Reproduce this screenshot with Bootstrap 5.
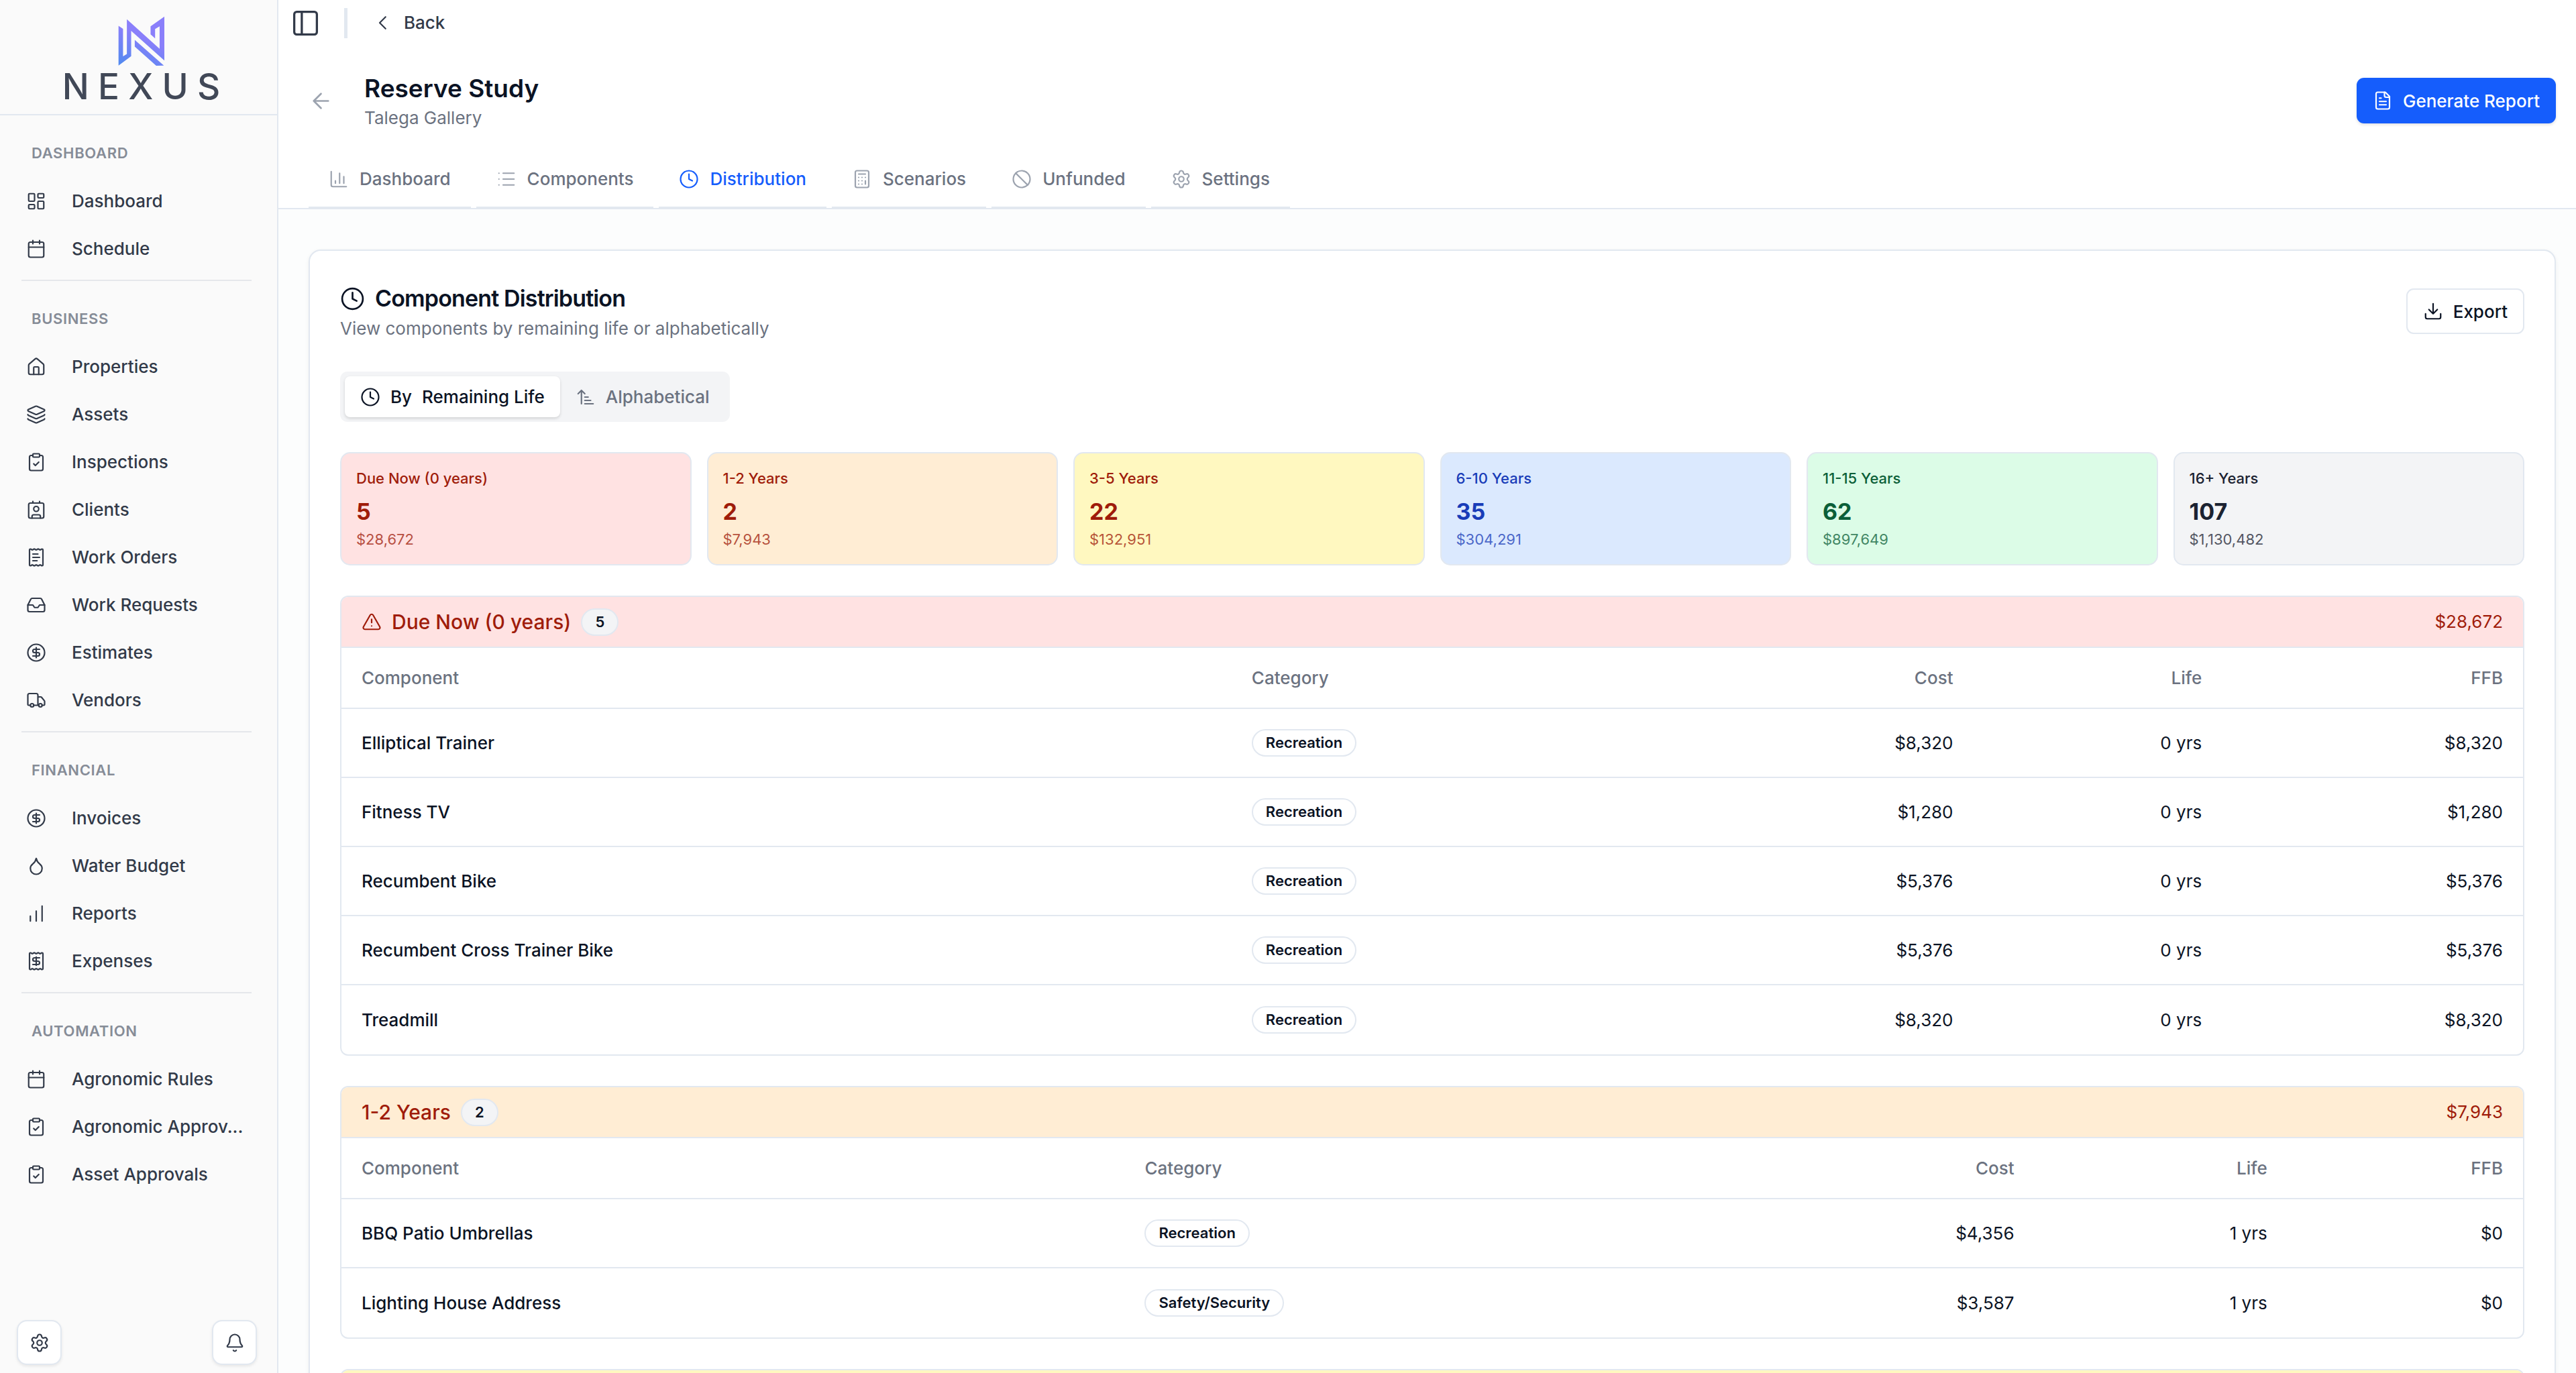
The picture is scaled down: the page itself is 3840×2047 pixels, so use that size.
<!DOCTYPE html>
<html lang="en">
<head>
<meta charset="utf-8">
<meta name="viewport" content="width=device-width, initial-scale=1">
<title>Reserve Study - Nexus</title>
<link href="https://cdn.jsdelivr.net/npm/bootstrap@5.3.0/dist/css/bootstrap.min.css" rel="stylesheet">
<style>
  :root { --line: #e2e8f0; --ink: #0b1324; --muted-ink: #6b7280; --side-ink: #323a49; }
  body { font-family: Inter, "Liberation Sans", sans-serif; font-size: 26px; line-height: 38px; color: var(--ink); background: #fcfdfd; height: 100vh; overflow: hidden; }
  .ico { width: 30px; height: 30px; flex: none; fill: none; stroke: currentColor; stroke-width: 1.75; stroke-linecap: round; stroke-linejoin: round; }
  .ico-lg { width: 37px; height: 37px; }
  .ico-xl { width: 45px; height: 45px; }
  .ico-pale { color: #9ca3af; }
  a { color: inherit; text-decoration: none; }

  /* sidebar */
  .side { width: 415px; flex: none; background: #fafafa; border-right: 2px solid var(--line); color: var(--side-ink); }
  .brand { height: 172px; border-bottom: 2px solid var(--line); padding: 24px 0 0 8px; }
  .brand-mark { width: 70px; height: 75px; }
  .brand-name { font-size: 53px; line-height: 60px; font-weight: 500; letter-spacing: .25em; margin-right: -.25em; color: #414857; }
  .side-group { margin: 0 38px 0 32px; padding: 36px 0 11px; border-bottom: 2px solid #e5e7eb; }
  .side-group:last-child { border-bottom: 0; }
  .side-title { font-size: 22px; line-height: 40px; font-weight: 600; letter-spacing: .03em; color: #868c97; padding-left: 15px; margin-bottom: 16px; }
  .side-link { height: 71px; padding-left: 7px; gap: 38px; font-weight: 500; }
  .side-foot { padding: 0 30px 12px 25px; }
  .square-btn { width: 67px; height: 67px; background: #fff; border: 2px solid var(--line); border-radius: 15px; color: var(--side-ink); box-shadow: 0 2px 4px rgba(0,0,0,.08); padding: 0; }

  /* top area */
  .top { background: #fff; border-bottom: 2px solid var(--line); }
  .crumbs { height: 68px; padding-left: 18px; }
  .crumb-rule { width: 5px; height: 45px; background: var(--line); margin: 0 30px 0 35px; }
  .plain-btn { background: none; border: 0; padding: 0; color: var(--side-ink); font-weight: 500; }
  .plain-btn.ico-pale { color: #9ca3af; }
  .page-head { padding: 38px 30px 0 45px; height: 160px; }
  .page-title { font-size: 37px; line-height: 51px; font-weight: 600; margin: 0; }
  .title-block { padding-left: 46px; }
  .soft { color: var(--muted-ink); }
  .act { height: 68px; border-radius: 11px; font-size: 26px; font-weight: 500; padding: 0 23px; gap: 15px; }
  .act-main { background: #155dfc; color: #fff; box-shadow: 0 2px 4px rgba(0,0,0,.12); margin-top: 10px; }
  .act-line { background: #fff; border: 2px solid var(--line); color: var(--ink); }
  .tabs { padding-left: 45px; gap: 8px; }
  .tab { height: 82px; padding: 0 30px 2px; gap: 16px; border-bottom: 2px solid var(--line); font-weight: 500; color: var(--muted-ink); }
  .tab .ico { color: #9ca3af; }
  .tab.on, .tab.on .ico { color: #155dfc; }

  /* panel */
  .panel-wrap { padding: 60px 30px 0 45px; }
  .panel { background: #fff; border: 2px solid var(--line); border-radius: 18px; padding: 45px; box-shadow: 0 2px 6px rgba(0,0,0,.06); }
  .panel-title { font-size: 34px; line-height: 52px; font-weight: 600; letter-spacing: -.025em; margin: 0; gap: 15px; }
  .seg { background: #f3f4f6; border-radius: 11px; padding: 7px; margin: 45px 0; }
  .seg-btn { height: 61px; border: 0; background: none; border-radius: 8px; padding: 0 23px; gap: 15px; font-weight: 500; color: var(--muted-ink); }
  .seg-btn.on { background: #fff; color: var(--ink); box-shadow: 0 2px 4px rgba(0,0,0,.14); }
  .tiles { display: grid; grid-template-columns: repeat(6, 1fr); gap: 23px; }
  .tile { border: 2px solid var(--line); border-radius: 15px; padding: 20px 22px; height: 169px; }
  .tile-name { font-size: 22px; line-height: 34px; font-weight: 500; }
  .tile-num { font-size: 34px; line-height: 53px; font-weight: 700; padding-top: 6px; }
  .tile-sum { font-size: 22px; line-height: 30px; opacity: .75; }
  .t-red { background: #ffe2e2; color: #9f1c0a; }
  .t-orange { background: #ffedd4; color: #9f1c0a; }
  .t-yellow { background: #fff8c0; color: #9f1c0a; }
  .t-blue { background: #dbe9fe; color: #193cb8; }
  .t-green { background: #dcfce7; color: #0b5f38; }
  .t-gray { background: #f3f4f6; color: #1b2231; }

  .bucket { border: 2px solid var(--line); border-radius: 12px; overflow: hidden; margin-top: 45px; }
  .bucket-head { height: 76px; border-bottom: 2px solid var(--line); padding: 0 30px; }
  .bucket-name { font-size: 30px; line-height: 40px; font-weight: 500; margin: 0; }
  .bucket-title { gap: 15px; }
  .pill { display: inline-block; font-size: 22px; line-height: 37px; font-weight: 600; border: 2px solid var(--line); border-radius: 21px; padding: 0 19px; color: var(--ink); vertical-align: middle; }
  .pill-count { background: #f3f4f6; }
  .grid-table { width: 100%; table-layout: fixed; border-collapse: separate; border-spacing: 0; }
  .grid-table th { height: 91px; font-weight: 500; color: var(--muted-ink); }
  .grid-table td { height: 103px; }
  .grid-table td:first-child { font-weight: 500; }
  .grid-table th, .grid-table td { padding: 0 30px; border-bottom: 2px solid var(--line); vertical-align: middle; }
  .grid-table tbody tr:last-child td { border-bottom: 0; }
  .a-name { width: 40.8%; } .a-cat { width: 17%; } .a-cost { width: 17%; } .a-life { width: 11.4%; } .a-ffb { width: 13.8%; }
  .b-name { width: 35.9%; } .b-cat { width: 20.8%; } .b-cost { width: 20.9%; } .b-life { width: 11.6%; } .b-ffb { width: 10.8%; }
</style>
</head>
<body class="d-flex">

<svg class="d-none" xmlns="http://www.w3.org/2000/svg">
  <symbol id="i-dash" viewBox="0 0 24 24"><rect x="3" y="3" width="7" height="9" rx="1"/><rect x="14" y="3" width="7" height="5" rx="1"/><rect x="14" y="12" width="7" height="9" rx="1"/><rect x="3" y="16" width="7" height="5" rx="1"/></symbol>
  <symbol id="i-cal" viewBox="0 0 24 24"><path d="M8 2v4M16 2v4M3 10h18"/><rect x="3" y="4" width="18" height="18" rx="2"/></symbol>
  <symbol id="i-home" viewBox="0 0 24 24"><path d="M15 21v-8a1 1 0 0 0-1-1h-4a1 1 0 0 0-1 1v8"/><path d="M3 10a2 2 0 0 1 .709-1.528l7-5.999a2 2 0 0 1 2.582 0l7 5.999A2 2 0 0 1 21 10v9a2 2 0 0 1-2 2H5a2 2 0 0 1-2-2z"/></symbol>
  <symbol id="i-layers" viewBox="0 0 24 24"><path d="M12.83 2.18a2 2 0 0 0-1.66 0L2.6 6.08a1 1 0 0 0 0 1.83l8.58 3.91a2 2 0 0 0 1.66 0l8.58-3.9a1 1 0 0 0 0-1.83z"/><path d="M2 12a1 1 0 0 0 .58.91l8.6 3.91a2 2 0 0 0 1.65 0l8.58-3.9A1 1 0 0 0 22 12"/><path d="M2 17a1 1 0 0 0 .58.91l8.6 3.91a2 2 0 0 0 1.65 0l8.58-3.9A1 1 0 0 0 22 17"/></symbol>
  <symbol id="i-clip" viewBox="0 0 24 24"><rect x="8" y="2" width="8" height="4" rx="1"/><path d="M16 4h2a2 2 0 0 1 2 2v14a2 2 0 0 1-2 2H6a2 2 0 0 1-2-2V6a2 2 0 0 1 2-2h2"/><path d="m9 14 2 2 4-4"/></symbol>
  <symbol id="i-contact" viewBox="0 0 24 24"><path d="M16 2v2M8 2v2M7 22v-2a2 2 0 0 1 2-2h6a2 2 0 0 1 2 2v2"/><circle cx="12" cy="11" r="3"/><rect x="3" y="4" width="18" height="18" rx="2"/></symbol>
  <symbol id="i-receipt" viewBox="0 0 24 24"><path d="M4 3a1 1 0 0 1 1-1 1.3 1.3 0 0 1 .7.2l.933.6a1.3 1.3 0 0 0 1.4 0l.934-.6a1.3 1.3 0 0 1 1.4 0l.933.6a1.3 1.3 0 0 0 1.4 0l.933-.6a1.3 1.3 0 0 1 1.4 0l.934.6a1.3 1.3 0 0 0 1.4 0l.933-.6A1.3 1.3 0 0 1 19 2a1 1 0 0 1 1 1v18a1 1 0 0 1-1 1 1.3 1.3 0 0 1-.7-.2l-.933-.6a1.3 1.3 0 0 0-1.4 0l-.934.6a1.3 1.3 0 0 1-1.4 0l-.933-.6a1.3 1.3 0 0 0-1.4 0l-.933.6a1.3 1.3 0 0 1-1.4 0l-.934-.6a1.3 1.3 0 0 0-1.4 0l-.933.6a1.3 1.3 0 0 1-.7.2 1 1 0 0 1-1-1z"/><path d="M13 16H8M14 8H8M16 12H8"/></symbol>
  <symbol id="i-expense" viewBox="0 0 24 24"><path d="M4 3a1 1 0 0 1 1-1 1.3 1.3 0 0 1 .7.2l.933.6a1.3 1.3 0 0 0 1.4 0l.934-.6a1.3 1.3 0 0 1 1.4 0l.933.6a1.3 1.3 0 0 0 1.4 0l.933-.6a1.3 1.3 0 0 1 1.4 0l.934.6a1.3 1.3 0 0 0 1.4 0l.933-.6A1.3 1.3 0 0 1 19 2a1 1 0 0 1 1 1v18a1 1 0 0 1-1 1 1.3 1.3 0 0 1-.7-.2l-.933-.6a1.3 1.3 0 0 0-1.4 0l-.934.6a1.3 1.3 0 0 1-1.4 0l-.933-.6a1.3 1.3 0 0 0-1.4 0l-.933.6a1.3 1.3 0 0 1-1.4 0l-.934-.6a1.3 1.3 0 0 0-1.4 0l-.933.6a1.3 1.3 0 0 1-.7.2 1 1 0 0 1-1-1z"/><path d="M12 17V7M16 8h-6a2 2 0 0 0 0 4h4a2 2 0 0 1 0 4H8"/></symbol>
  <symbol id="i-inbox" viewBox="0 0 24 24"><path d="M22 12h-6l-2 3h-4l-2-3H2"/><path d="M5.45 5.11 2 12v6a2 2 0 0 0 2 2h16a2 2 0 0 0 2-2v-6l-3.45-6.89A2 2 0 0 0 16.76 4H7.24a2 2 0 0 0-1.79 1.11z"/></symbol>
  <symbol id="i-dollar" viewBox="0 0 24 24"><circle cx="12" cy="12" r="10"/><path d="M16 8h-6a2 2 0 1 0 0 4h4a2 2 0 1 1 0 4H8M12 18V6"/></symbol>
  <symbol id="i-truck" viewBox="0 0 24 24"><path d="M14 18V6a2 2 0 0 0-2-2H4a2 2 0 0 0-2 2v11a1 1 0 0 0 1 1h2M15 18H9M19 18h2a1 1 0 0 0 1-1v-3.65a1 1 0 0 0-.22-.624l-3.48-4.35A1 1 0 0 0 17.52 8H14"/><circle cx="17" cy="18" r="2"/><circle cx="7" cy="18" r="2"/></symbol>
  <symbol id="i-drop" viewBox="0 0 24 24"><path d="M12 22a7 7 0 0 0 7-7c0-2-1-3.9-3-5.5s-3.5-4-4-6.5c-.5 2.5-2 4.9-4 6.5C6 11.1 5 13 5 15a7 7 0 0 0 7 7z"/></symbol>
  <symbol id="i-bars" viewBox="0 0 24 24"><path d="M5 21v-6M12 21V9M19 21V3"/></symbol>
  <symbol id="i-gear" viewBox="0 0 24 24"><path d="M9.671 4.136a2.34 2.34 0 0 1 4.659 0 2.34 2.34 0 0 0 3.319 1.915 2.34 2.34 0 0 1 2.33 4.033 2.34 2.34 0 0 0 0 3.831 2.34 2.34 0 0 1-2.33 4.033 2.34 2.34 0 0 0-3.319 1.915 2.34 2.34 0 0 1-4.659 0 2.34 2.34 0 0 0-3.32-1.915 2.34 2.34 0 0 1-2.33-4.033 2.34 2.34 0 0 0 0-3.831A2.34 2.34 0 0 1 6.35 6.051a2.34 2.34 0 0 0 3.319-1.915"/><circle cx="12" cy="12" r="3"/></symbol>
  <symbol id="i-bell" viewBox="0 0 24 24"><path d="M10.268 21a2 2 0 0 0 3.464 0"/><path d="M3.262 15.326A1 1 0 0 0 4 17h16a1 1 0 0 0 .74-1.673C19.41 13.956 18 12.499 18 8A6 6 0 0 0 6 8c0 4.499-1.411 5.956-2.738 7.326"/></symbol>
  <symbol id="i-panel" viewBox="0 0 24 24"><rect x="3" y="3" width="18" height="18" rx="2"/><path d="M9 3v18"/></symbol>
  <symbol id="i-chev" viewBox="0 0 24 24"><path d="m15 19-7-7 7-7"/></symbol>
  <symbol id="i-left" viewBox="0 0 24 24"><path d="m12 19-7-7 7-7M19 12H5"/></symbol>
  <symbol id="i-chart" viewBox="0 0 24 24"><path d="M3 3v16a2 2 0 0 0 2 2h16M18 17V9M13 17V5M8 17v-3"/></symbol>
  <symbol id="i-list" viewBox="0 0 24 24"><path d="M3 5h.01M3 12h.01M3 19h.01M8 5h13M8 12h13M8 19h13"/></symbol>
  <symbol id="i-clock" viewBox="0 0 24 24"><circle cx="12" cy="12" r="10"/><path d="M12 6v6l4 2"/></symbol>
  <symbol id="i-calc" viewBox="0 0 24 24"><rect x="4" y="2" width="16" height="20" rx="2"/><path d="M8 6h8M16 14v4M16 10h.01M12 10h.01M8 10h.01M12 14h.01M8 14h.01M12 18h.01M8 18h.01"/></symbol>
  <symbol id="i-ban" viewBox="0 0 24 24"><circle cx="12" cy="12" r="10"/><path d="m4.9 4.9 14.2 14.2"/></symbol>
  <symbol id="i-file" viewBox="0 0 24 24"><path d="M15 2H6a2 2 0 0 0-2 2v16a2 2 0 0 0 2 2h12a2 2 0 0 0 2-2V7z"/><path d="M14 2v4a2 2 0 0 0 2 2h4M10 9H8M16 13H8M16 17H8"/></symbol>
  <symbol id="i-down" viewBox="0 0 24 24"><path d="M12 15V3M21 15v4a2 2 0 0 1-2 2H5a2 2 0 0 1-2-2v-4M7 10l5 5 5-5"/></symbol>
  <symbol id="i-sort" viewBox="0 0 24 24"><path d="m3 8 4-4 4 4M7 4v16M11 12h4M11 16h7M11 20h10"/></symbol>
  <symbol id="i-warn" viewBox="0 0 24 24"><path d="m21.73 18-8-14a2 2 0 0 0-3.48 0l-8 14A2 2 0 0 0 4 21h16a2 2 0 0 0 1.73-3M12 9v4M12 17h.01"/></symbol>
</svg>

<aside class="side d-flex flex-column vh-100">
  <div class="brand d-flex flex-column align-items-center">
    <svg class="brand-mark" viewBox="275 26 208 226" preserveAspectRatio="none" aria-hidden="true">
      <defs><linearGradient id="mark" gradientUnits="userSpaceOnUse" x1="280" y1="235" x2="345" y2="100"><stop offset="0" stop-color="#5389f0"/><stop offset="1" stop-color="#8a7ffa"/></linearGradient></defs>
      <path fill="url(#mark)" d="M277 70 297 83V207L314 196V40L459 173V72L439 84V126L419 108V72L480 28V226L333 92V206L277 248ZM349 133 478 248 444 249 349 163Z"/>
    </svg>
    <div class="brand-name">NEXUS</div>
  </div>
  <nav class="flex-grow-1" aria-label="Main">
    <div class="side-group">
      <div class="side-title">DASHBOARD</div>
      <a class="side-link d-flex align-items-center" href="#"><svg class="ico"><use href="#i-dash"/></svg><span class="text-truncate">Dashboard</span></a>
      <a class="side-link d-flex align-items-center" href="#"><svg class="ico"><use href="#i-cal"/></svg><span class="text-truncate">Schedule</span></a>
    </div>
    <div class="side-group">
      <div class="side-title">BUSINESS</div>
      <a class="side-link d-flex align-items-center" href="#"><svg class="ico"><use href="#i-home"/></svg><span class="text-truncate">Properties</span></a>
      <a class="side-link d-flex align-items-center" href="#"><svg class="ico"><use href="#i-layers"/></svg><span class="text-truncate">Assets</span></a>
      <a class="side-link d-flex align-items-center" href="#"><svg class="ico"><use href="#i-clip"/></svg><span class="text-truncate">Inspections</span></a>
      <a class="side-link d-flex align-items-center" href="#"><svg class="ico"><use href="#i-contact"/></svg><span class="text-truncate">Clients</span></a>
      <a class="side-link d-flex align-items-center" href="#"><svg class="ico"><use href="#i-receipt"/></svg><span class="text-truncate">Work Orders</span></a>
      <a class="side-link d-flex align-items-center" href="#"><svg class="ico"><use href="#i-inbox"/></svg><span class="text-truncate">Work Requests</span></a>
      <a class="side-link d-flex align-items-center" href="#"><svg class="ico"><use href="#i-dollar"/></svg><span class="text-truncate">Estimates</span></a>
      <a class="side-link d-flex align-items-center" href="#"><svg class="ico"><use href="#i-truck"/></svg><span class="text-truncate">Vendors</span></a>
    </div>
    <div class="side-group">
      <div class="side-title">FINANCIAL</div>
      <a class="side-link d-flex align-items-center" href="#"><svg class="ico"><use href="#i-dollar"/></svg><span class="text-truncate">Invoices</span></a>
      <a class="side-link d-flex align-items-center" href="#"><svg class="ico"><use href="#i-drop"/></svg><span class="text-truncate">Water Budget</span></a>
      <a class="side-link d-flex align-items-center" href="#"><svg class="ico"><use href="#i-bars"/></svg><span class="text-truncate">Reports</span></a>
      <a class="side-link d-flex align-items-center" href="#"><svg class="ico"><use href="#i-expense"/></svg><span class="text-truncate">Expenses</span></a>
    </div>
    <div class="side-group">
      <div class="side-title">AUTOMATION</div>
      <a class="side-link d-flex align-items-center" href="#"><svg class="ico"><use href="#i-cal"/></svg><span class="text-truncate">Agronomic Rules</span></a>
      <a class="side-link d-flex align-items-center" href="#"><svg class="ico"><use href="#i-clip"/></svg><span class="text-truncate">Agronomic Approv...</span></a>
      <a class="side-link d-flex align-items-center" href="#"><svg class="ico"><use href="#i-clip"/></svg><span class="text-truncate">Asset Approvals</span></a>
    </div>
  </nav>
  <div class="side-foot d-flex justify-content-between">
    <button class="square-btn d-flex align-items-center justify-content-center" type="button" aria-label="Settings"><svg class="ico"><use href="#i-gear"/></svg></button>
    <button class="square-btn d-flex align-items-center justify-content-center" type="button" aria-label="Notifications"><svg class="ico"><use href="#i-bell"/></svg></button>
  </div>
</aside>

<main class="flex-grow-1 vh-100 overflow-hidden">
  <header class="top">
    <div class="crumbs d-flex align-items-center">
      <button class="plain-btn d-flex" type="button" aria-label="Toggle sidebar"><svg class="ico ico-xl"><use href="#i-panel"/></svg></button>
      <div class="crumb-rule"></div>
      <button class="plain-btn d-flex align-items-center gap-3" type="button"><svg class="ico ms-2"><use href="#i-chev"/></svg>Back</button>
    </div>
    <div class="page-head d-flex align-items-start justify-content-between">
      <div class="d-flex align-items-center">
        <button class="plain-btn ico-pale d-flex" type="button" aria-label="Go back"><svg class="ico ico-lg"><use href="#i-left"/></svg></button>
        <div class="title-block">
          <h1 class="page-title">Reserve Study</h1>
          <div class="soft">Talega Gallery</div>
        </div>
      </div>
      <button class="btn act act-main d-flex align-items-center" type="button"><svg class="ico"><use href="#i-file"/></svg>Generate Report</button>
    </div>
    <nav class="tabs d-flex" aria-label="Study sections">
      <a class="tab d-flex align-items-center" href="#"><svg class="ico"><use href="#i-chart"/></svg>Dashboard</a>
      <a class="tab d-flex align-items-center" href="#"><svg class="ico"><use href="#i-list"/></svg>Components</a>
      <a class="tab on d-flex align-items-center" href="#" aria-current="page"><svg class="ico"><use href="#i-clock"/></svg>Distribution</a>
      <a class="tab d-flex align-items-center" href="#"><svg class="ico"><use href="#i-calc"/></svg>Scenarios</a>
      <a class="tab d-flex align-items-center" href="#"><svg class="ico"><use href="#i-ban"/></svg>Unfunded</a>
      <a class="tab d-flex align-items-center" href="#"><svg class="ico"><use href="#i-gear"/></svg>Settings</a>
    </nav>
  </header>

  <div class="panel-wrap">
    <section class="panel">
      <div class="d-flex justify-content-between align-items-center">
        <div>
          <h2 class="panel-title d-flex align-items-center"><svg class="ico ico-lg"><use href="#i-clock"/></svg>Component Distribution</h2>
          <div class="soft">View components by remaining life or alphabetically</div>
        </div>
        <button class="btn act act-line d-flex align-items-center" type="button"><svg class="ico"><use href="#i-down"/></svg>Export</button>
      </div>

      <div class="seg d-inline-flex">
        <button class="seg-btn on d-flex align-items-center" type="button"><svg class="ico"><use href="#i-clock"/></svg><span>By</span><span>Remaining Life</span></button>
        <button class="seg-btn d-flex align-items-center" type="button"><svg class="ico"><use href="#i-sort"/></svg>Alphabetical</button>
      </div>

      <div class="tiles">
        <div class="tile t-red"><div class="tile-name">Due Now (0 years)</div><div class="tile-num">5</div><div class="tile-sum">$28,672</div></div>
        <div class="tile t-orange"><div class="tile-name">1-2 Years</div><div class="tile-num">2</div><div class="tile-sum">$7,943</div></div>
        <div class="tile t-yellow"><div class="tile-name">3-5 Years</div><div class="tile-num">22</div><div class="tile-sum">$132,951</div></div>
        <div class="tile t-blue"><div class="tile-name">6-10 Years</div><div class="tile-num">35</div><div class="tile-sum">$304,291</div></div>
        <div class="tile t-green"><div class="tile-name">11-15 Years</div><div class="tile-num">62</div><div class="tile-sum">$897,649</div></div>
        <div class="tile t-gray"><div class="tile-name">16+ Years</div><div class="tile-num">107</div><div class="tile-sum">$1,130,482</div></div>
      </div>

      <section class="bucket">
        <div class="bucket-head t-red d-flex align-items-center justify-content-between">
          <div class="bucket-title d-flex align-items-center"><svg class="ico"><use href="#i-warn"/></svg><h3 class="bucket-name">Due Now (0 years)</h3><span class="pill pill-count">5</span></div>
          <div>$28,672</div>
        </div>
        <table class="grid-table">
          <colgroup><col class="a-name"><col class="a-cat"><col class="a-cost"><col class="a-life"><col class="a-ffb"></colgroup>
          <thead><tr><th scope="col">Component</th><th scope="col">Category</th><th scope="col" class="text-end">Cost</th><th scope="col" class="text-end">Life</th><th scope="col" class="text-end">FFB</th></tr></thead>
          <tbody>
            <tr><td>Elliptical Trainer</td><td><span class="pill">Recreation</span></td><td class="text-end">$8,320</td><td class="text-end">0 yrs</td><td class="text-end">$8,320</td></tr>
            <tr><td>Fitness TV</td><td><span class="pill">Recreation</span></td><td class="text-end">$1,280</td><td class="text-end">0 yrs</td><td class="text-end">$1,280</td></tr>
            <tr><td>Recumbent Bike</td><td><span class="pill">Recreation</span></td><td class="text-end">$5,376</td><td class="text-end">0 yrs</td><td class="text-end">$5,376</td></tr>
            <tr><td>Recumbent Cross Trainer Bike</td><td><span class="pill">Recreation</span></td><td class="text-end">$5,376</td><td class="text-end">0 yrs</td><td class="text-end">$5,376</td></tr>
            <tr><td>Treadmill</td><td><span class="pill">Recreation</span></td><td class="text-end">$8,320</td><td class="text-end">0 yrs</td><td class="text-end">$8,320</td></tr>
          </tbody>
        </table>
      </section>

      <section class="bucket">
        <div class="bucket-head t-orange d-flex align-items-center justify-content-between">
          <div class="bucket-title d-flex align-items-center"><h3 class="bucket-name">1-2 Years</h3><span class="pill pill-count">2</span></div>
          <div>$7,943</div>
        </div>
        <table class="grid-table">
          <colgroup><col class="b-name"><col class="b-cat"><col class="b-cost"><col class="b-life"><col class="b-ffb"></colgroup>
          <thead><tr><th scope="col">Component</th><th scope="col">Category</th><th scope="col" class="text-end">Cost</th><th scope="col" class="text-end">Life</th><th scope="col" class="text-end">FFB</th></tr></thead>
          <tbody>
            <tr><td>BBQ Patio Umbrellas</td><td><span class="pill">Recreation</span></td><td class="text-end">$4,356</td><td class="text-end">1 yrs</td><td class="text-end">$0</td></tr>
            <tr><td>Lighting House Address</td><td><span class="pill">Safety/Security</span></td><td class="text-end">$3,587</td><td class="text-end">1 yrs</td><td class="text-end">$0</td></tr>
          </tbody>
        </table>
      </section>

      <section class="bucket">
        <div class="bucket-head t-yellow"></div>
      </section>
    </section>
  </div>
</main>

<script src="https://cdn.jsdelivr.net/npm/bootstrap@5.3.0/dist/js/bootstrap.bundle.min.js"></script>
</body>
</html>
